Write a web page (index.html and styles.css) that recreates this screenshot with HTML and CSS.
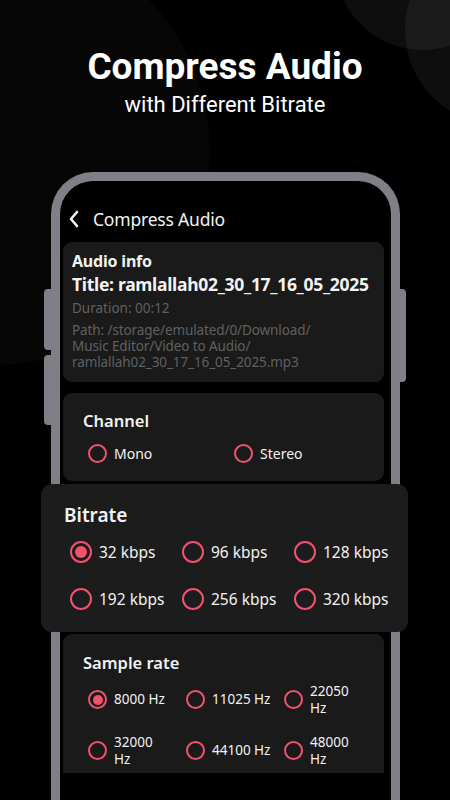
FILE: index.html
```html
<!DOCTYPE html>
<html lang="en">
<head>
<meta charset="utf-8">
<title>Compress Audio</title>
<link rel="stylesheet" href="styles.css">
</head>
<body>
<div class="page">
  <div class="deco deco-left"></div>
  <div class="deco deco-tr1"></div>
  <div class="deco deco-tr2"></div>

  <header class="hero">
    <h1 class="hero-title">Compress Audio</h1>
    <p class="hero-sub">with Different Bitrate</p>
  </header>

  <div class="phone">
    <span class="btn btn-l1"></span>
    <span class="btn btn-l2"></span>
    <span class="btn btn-r1"></span>

    <div class="screen">
      <div class="appbar">
        <svg class="back" width="12" height="18" viewBox="0 0 12 18"><polyline points="9,2 3,9 9,16" fill="none" stroke="#f2f2f2" stroke-width="2.6" stroke-linecap="round" stroke-linejoin="round"/></svg>
        <span class="appbar-title">Compress Audio</span>
      </div>

      <section class="card info">
        <div class="info-head">Audio info</div>
        <div class="info-title">Title: ramlallah02_30_17_16_05_2025</div>
        <div class="info-dur">Duration: 00:12</div>
        <div class="info-path">Path: /storage/emulated/0/Download/<br>Music Editor/Video to Audio/<br>ramlallah02_30_17_16_05_2025.mp3</div>
      </section>

      <section class="card channel">
        <div class="card-title">Channel</div>
        <div class="grid grid-2">
          <div class="opt"><span class="radio"></span><span class="lbl">Mono</span></div>
          <div class="opt"><span class="radio"></span><span class="lbl">Stereo</span></div>
        </div>
      </section>

      <section class="card bitrate">
        <div class="bitrate-title">Bitrate</div>
        <div class="grid grid-br">
          <div class="opt"><span class="radio on"></span><span class="lbl">32 kbps</span></div>
          <div class="opt"><span class="radio"></span><span class="lbl">96 kbps</span></div>
          <div class="opt"><span class="radio"></span><span class="lbl">128 kbps</span></div>
          <div class="opt"><span class="radio"></span><span class="lbl">192 kbps</span></div>
          <div class="opt"><span class="radio"></span><span class="lbl">256 kbps</span></div>
          <div class="opt"><span class="radio"></span><span class="lbl">320 kbps</span></div>
        </div>
      </section>

      <section class="card sample">
        <div class="card-title">Sample rate</div>
        <div class="grid grid-sr">
          <div class="opt"><span class="radio on"></span><span class="lbl">8000 Hz</span></div>
          <div class="opt"><span class="radio"></span><span class="lbl">11025 Hz</span></div>
          <div class="opt"><span class="radio"></span><span class="lbl">22050<br>Hz</span></div>
          <div class="opt"><span class="radio"></span><span class="lbl">32000<br>Hz</span></div>
          <div class="opt"><span class="radio"></span><span class="lbl">44100 Hz</span></div>
          <div class="opt"><span class="radio"></span><span class="lbl">48000<br>Hz</span></div>
        </div>
      </section>
    </div>
  </div>
</div>
</body>
</html>
```

FILE: styles.css
```css
* { box-sizing: border-box; }
html, body {
  margin: 0;
  padding: 0;
  background: #000;
}
body {
  width: 450px;
  height: 800px;
  overflow: hidden;
}
.page {
  position: relative;
  width: 450px;
  height: 800px;
  overflow: hidden;
  background: #000;
}

/* decorative circles */
.deco {
  position: absolute;
  border-radius: 50%;
  background: rgba(255, 255, 255, 0.055);
}
.deco-left {
  left: -220px;
  top: -65px;
  width: 430px;
  height: 430px;
  background: rgba(255, 255, 255, 0.022);
}
.deco-tr1 {
  left: 335px;
  top: -125px;
  width: 175px;
  height: 175px;
}
.deco-tr2 {
  left: 405px;
  top: -65px;
  width: 190px;
  height: 190px;
}

/* hero */
.hero {
  position: relative;
  text-align: center;
  color: #fff;
  font-family: Roboto, "Liberation Sans", sans-serif;
  padding-top: 45px;
}
.hero-title {
  margin: 0;
  font-size: 37px;
  line-height: 44px;
  font-weight: 700;
}
.hero-sub {
  margin: 2px 0 0 0;
  font-size: 22px;
  line-height: 28px;
  font-weight: 400;
}

/* phone */
.phone {
  position: relative;
  width: 349px;
  height: 700px;
  margin: 53px 0 0 51px;
  border: 9px solid #7f7f88;
  border-bottom: none;
  border-radius: 42px 42px 0 0;
  background: #000;
}
.btn {
  position: absolute;
  width: 7px;
  background: #7f7f88;
}
.btn-l1 { left: -16px; top: 108px; height: 61px; border-radius: 4px 0 0 4px; }
.btn-l2 { left: -16px; top: 174px; height: 70px; border-radius: 4px 0 0 4px; }
.btn-r1 { right: -15px; top: 108px; height: 93px; border-radius: 0 4px 4px 0; }

.screen {
  padding: 0 7px 0 3px;
  font-family: "Noto Sans", "Open Sans", sans-serif;
  color: #f2f2f2;
}

.appbar {
  display: flex;
  align-items: center;
  height: 61px;
  padding: 14px 0 0 5px;
}
.back { display: block; margin-right: 13px; }
.appbar-title {
  font-size: 17.5px;
  letter-spacing: -0.2px;
}

.card {
  background: #1a1a1a;
  border-radius: 9px;
}

.info {
  height: 140px;
  padding: 9px 9px 0 9px;
}
.info-head {
  font-size: 16px;
  line-height: 20px;
  font-weight: 700;
  letter-spacing: -0.2px;
}
.info-title {
  font-size: 17.5px;
  line-height: 22px;
  font-weight: 700;
  letter-spacing: -0.3px;
  margin-top: 2px;
}
.info-dur {
  margin-top: 4px;
  font-size: 13.5px;
  line-height: 18px;
  color: #606060;
}
.info-path {
  margin-top: 5px;
  font-size: 13.5px;
  line-height: 16px;
  color: #606060;
  letter-spacing: -0.1px;
}

.card-title {
  font-size: 16.5px;
  line-height: 22px;
  font-weight: 600;
}

.channel {
  margin-top: 11px;
  height: 88px;
  padding: 17px 20px 0 20px;
}
.grid { display: grid; }
.grid-2 {
  grid-template-columns: 146px 146px;
  margin-top: 12px;
  padding-left: 5px;
}

.opt {
  display: flex;
  align-items: center;
  gap: 7px;
  font-size: 14px;
  line-height: 16px;
}
.radio {
  flex: none;
  width: 19px;
  height: 19px;
  border: 2.4px solid #f2526b;
  border-radius: 50%;
  display: flex;
  align-items: center;
  justify-content: center;
}
.radio.on::after {
  content: "";
  width: 10px;
  height: 10px;
  border-radius: 50%;
  background: #f2526b;
}

.bitrate {
  position: relative;
  margin: 3px -24px 0 -22px;
  height: 148px;
  padding: 18px 0 0 23px;
  background: #1c1c1c;
  border-radius: 11px;
}
.bitrate-title {
  font-size: 19px;
  line-height: 26px;
  font-weight: 600;
}
.grid-br {
  grid-template-columns: 112px 112px 112px;
  grid-auto-rows: 47px;
  margin-top: 0;
  padding-left: 6px;
}
.grid-br .opt {
  font-size: 15.5px;
  gap: 7px;
}
.grid-br .radio {
  width: 22px;
  height: 22px;
  border-width: 2.6px;
}
.grid-br .radio.on::after {
  width: 12px;
  height: 12px;
}

.sample {
  margin-top: 2px;
  height: 139px;
  padding: 18px 20px 0 20px;
  border-radius: 9px 9px 0 0;
}
.grid-sr {
  grid-template-columns: 98px 98px 98px;
  grid-auto-rows: 51px;
  margin-top: 0;
  padding-left: 5px;
}
.grid-sr .opt {
  font-size: 13.5px;
  line-height: 16.5px;
}
```
